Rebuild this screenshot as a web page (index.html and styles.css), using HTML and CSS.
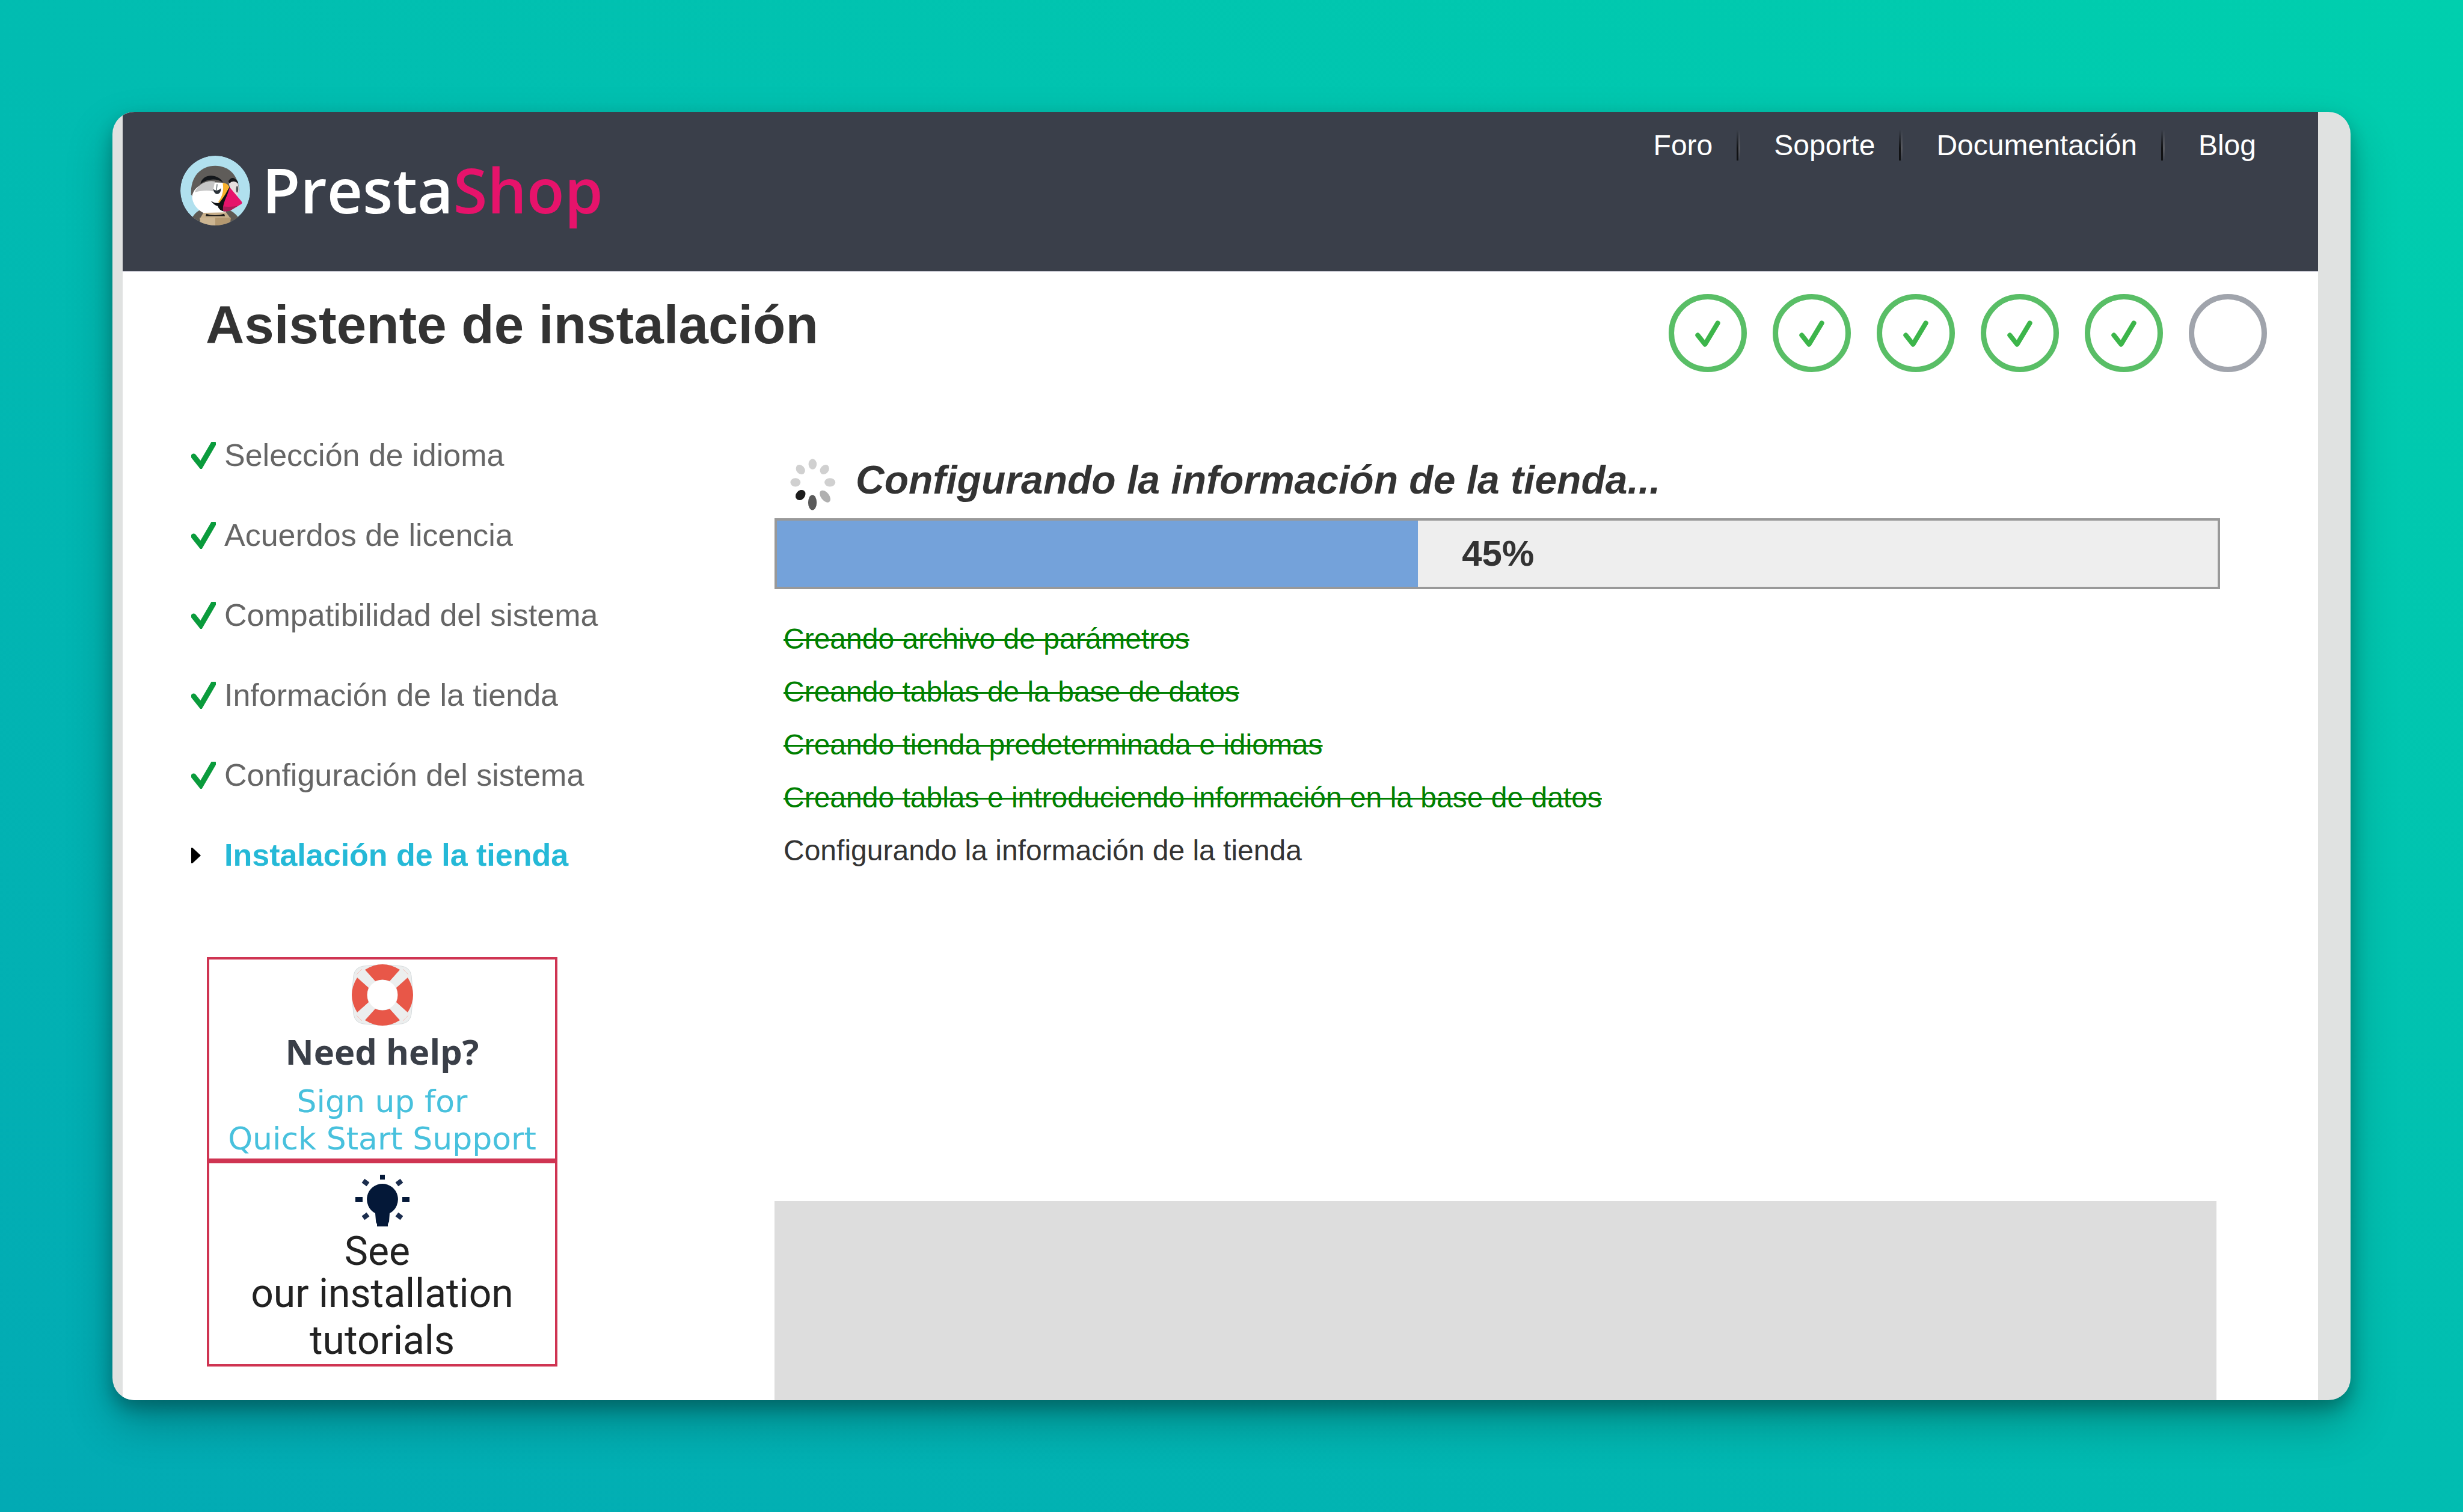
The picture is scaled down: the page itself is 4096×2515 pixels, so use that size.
FILE: index.html
```html
<!DOCTYPE html>
<html lang="es">
<head>
<meta charset="utf-8">
<title>PrestaShop - Asistente de instalación</title>
<link rel="stylesheet" href="styles.css">
</head>
<body>
<svg class="defs" aria-hidden="true">
  <symbol id="done" viewBox="0 0 41 45"><path d="M4 24 L16 39 L37 3" fill="none" stroke="#0a9b3c" stroke-width="9" stroke-linecap="round"/></symbol>
  <symbol id="step-done" viewBox="0 0 129 129"><circle cx="64.500" cy="64.500" r="60" fill="none" stroke="#59be66" stroke-width="9"/><path d="M48 68 L60 83 L81 48" fill="none" stroke="#3cb54a" stroke-width="8" stroke-linecap="round" stroke-linejoin="round"/></symbol>
</svg>
<div class="window">
  <div class="page">
    <header class="header">
      <a class="logo" href="#">
        <svg class="puffin" viewBox="65 54 374 374" aria-hidden="true">
          <clipPath id="badge"><circle cx="252" cy="241" r="187"/></clipPath>
          <g clip-path="url(#badge)">
            <circle cx="252" cy="241" r="187" fill="#b0e0ee"/>
            <path d="M125 392 Q150 345 190 342 L315 342 Q350 350 378 388 L330 430 L170 430 Z" fill="#5e5953"/>
            <path d="M122 262 C118 165 175 108 252 108 C325 108 378 160 380 245 L376 300 L300 380 L190 350 Z" fill="#5f5c59"/>
            <path d="M325 205 Q345 175 372 200 Q385 240 370 280 L335 240 Z" fill="#e6dfdf"/>
            <path d="M380 240 L388 300 L366 280 Z" fill="#b0e0ee"/>
            <path d="M322 190 Q345 155 372 192 L376 205 Q350 180 328 202 Z" fill="#15171a"/>
            <ellipse cx="369" cy="234" rx="6" ry="18" fill="#4d5357"/>
            <path d="M128 270 C140 215 190 190 300 200 L290 290 L310 365 C250 385 195 372 165 345 C142 325 128 300 128 270 Z" fill="#fff"/>
            <path d="M142 250 C155 210 205 182 250 192 L240 245 Q200 235 142 250 Z" fill="#c6c6c6"/>
            <path d="M172 205 C185 145 270 150 294 198 C260 175 215 175 172 205 Z" fill="#14171b"/>
            <path d="M240 232 Q262 250 282 228 Q284 258 261 260 Q245 256 240 232 Z" fill="#2a3238"/>
            <path d="M262 207 L258 240" stroke="#6e767b" stroke-width="5"/>
            <path d="M292 200 Q318 200 328 224 Q305 255 292 318 L268 302 Q302 258 292 200 Z" fill="#f8b12c"/>
            <path d="M328 222 C310 255 300 275 274 306 Q250 312 228 296 Q245 320 265 324 Q272 348 302 354 L320 320 L338 240 Z" fill="#101214"/>
            <path d="M330 224 L392 298 Q400 308 390 314 L338 345 Q312 356 294 350 Q290 330 303 295 Q318 262 330 224 Z" fill="#e6136b"/>
            <path d="M294 326 Q335 332 376 322 L338 345 Q312 356 294 350 Z" fill="#a81d56"/>
            <path d="M188 360 L310 358 L332 388 L172 388 Z" fill="#c7ae8a"/>
            <path d="M204 366 Q250 380 300 366 L304 378 L200 378 Z" fill="#1d1b19"/>
            <path d="M168 386 L252 386 L252 430 L175 428 Z" fill="#ccb592"/>
            <path d="M252 386 L336 386 L330 428 L252 430 Z" fill="#b39870"/>
          </g>
        </svg>
        <span class="wordmark">Presta<span class="wordmark-shop">Shop</span></span>
      </a>
      <nav>
        <ul class="links">
          <li><a href="#">Foro</a></li>
          <li><a href="#">Soporte</a></li>
          <li><a href="#">Documentación</a></li>
          <li><a href="#">Blog</a></li>
        </ul>
      </nav>
    </header>

    <div class="titlebar">
      <h1>Asistente de instalación</h1>
      <ol class="steps" aria-label="Progreso">
        <li><svg><use href="#step-done"/></svg></li>
        <li><svg><use href="#step-done"/></svg></li>
        <li><svg><use href="#step-done"/></svg></li>
        <li><svg><use href="#step-done"/></svg></li>
        <li><svg><use href="#step-done"/></svg></li>
        <li><svg viewBox="0 0 129 129"><circle cx="64.500" cy="64.500" r="60" fill="none" stroke="#a0a4ac" stroke-width="9"/></svg></li>
      </ol>
    </div>

    <div class="content">
      <aside class="sidebar">
        <ol class="stages">
          <li><svg class="mark"><use href="#done"/></svg>Selección de idioma</li>
          <li><svg class="mark"><use href="#done"/></svg>Acuerdos de licencia</li>
          <li><svg class="mark"><use href="#done"/></svg>Compatibilidad del sistema</li>
          <li><svg class="mark"><use href="#done"/></svg>Información de la tienda</li>
          <li><svg class="mark"><use href="#done"/></svg>Configuración del sistema</li>
          <li class="current"><svg class="mark" viewBox="0 0 41 45"><path d="M0 10 L2 10 L16 23 L2 36 L0 36 Z"/></svg>Instalación de la tienda</li>
        </ol>
        <div class="help">
          <a class="card" href="#">
            <svg class="buoy" viewBox="0 0 104 104" aria-hidden="true">
              <path d="M20 4 Q52 0 84 4 Q98 6 100 20 Q104 52 100 84 Q98 98 84 100 Q52 104 20 100 Q6 98 4 84 Q0 52 4 20 Q6 6 20 4 Z" fill="#eceeee" stroke="#d6dcde" stroke-width="1"/>
              <path d="M23 10 Q52 -8 81 10 L64 29 Q52 24 40 29 Z M94 23 Q112 52 94 81 L75 64 Q80 52 75 40 Z M81 94 Q52 112 23 94 L40 75 Q52 80 64 75 Z M10 81 Q-8 52 10 23 L29 40 Q24 52 29 64 Z" fill="#e85748"/>
              <path d="M9 18 L18 9 M86 9 L95 18 M95 86 L86 95 M18 95 L9 86" stroke="#f4c3bd" stroke-width="1"/>
              <circle cx="52" cy="52" r="25" fill="#fff"/>
            </svg>
            <strong>Need help?</strong>
            <span class="signup">Sign up for<br>Quick Start Support</span>
          </a>
          <a class="card tutorials" href="#">
            <svg class="bulb" viewBox="0 0 90 86" aria-hidden="true">
              <g fill="#041838"><path d="M45 15 A26 26 0 0 1 57 64 L56 78 Q55 80 54 82 L54 86 L36 86 L36 82 Q34 80 34 76 L33 64 A26 26 0 0 1 45 15 Z"/>
              <rect x="41" y="0" width="8" height="8"/><rect x="0" y="37" width="12" height="8"/><rect x="78" y="37" width="12" height="8"/></g>
              <path d="M13 10 L21 16 M77 10 L69 16 M13 72 L21 66 M77 72 L69 66" stroke="#1b2d4e" stroke-width="8"/>
            </svg>
            <span class="see">See&nbsp;</span>
            <span class="see-more">our installation<br>tutorials</span>
          </a>
        </div>
      </aside>

      <main class="main">
        <div class="status">
          <svg class="spinner" viewBox="50 45 270 300" aria-hidden="true">
            <g fill="#d0d0d0">
              <ellipse cx="183" cy="87" rx="22" ry="28"/>
              <ellipse cx="247" cy="116" rx="22" ry="28" transform="rotate(40 247 116)"/>
              <ellipse cx="276" cy="185" rx="29" ry="23"/>
              <ellipse cx="91" cy="185" rx="27" ry="23"/>
              <ellipse cx="118" cy="116" rx="22" ry="28" transform="rotate(-40 118 116)"/>
            </g>
            <ellipse cx="250" cy="260" rx="22" ry="37" transform="rotate(-38 250 260)" fill="#b0b0b0"/>
            <ellipse cx="182" cy="293" rx="23" ry="41" fill="#5a5a5a"/>
            <ellipse cx="118" cy="253" rx="24" ry="30" transform="rotate(40 118 253)" fill="#1c1c1c"/>
          </svg>
          <h2 id="task">Configurando la información de la tienda...</h2>
        </div>
        <div class="progress" role="progressbar" aria-labelledby="task" aria-valuenow="45" aria-valuemin="0" aria-valuemax="100">
          <div class="progress-fill" style="width: 44.5%"></div>
          <span class="progress-value">45%</span>
        </div>
        <ol class="tasks">
          <li class="finished"><span>Creando archivo de parámetros</span></li>
          <li class="finished"><span>Creando tablas de la base de datos</span></li>
          <li class="finished"><span>Creando tienda predeterminada e idiomas</span></li>
          <li class="finished"><span>Creando tablas e introduciendo información en la base de datos</span></li>
          <li>Configurando la información de la tienda</li>
        </ol>
        <div class="panel"></div>
      </main>
    </div>
  </div>
</div>
</body>
</html>
```
FILE: styles.css
```css
* { box-sizing: border-box; }
body, h1, h2, ul, ol { margin: 0; padding: 0; }
ul, ol { list-style: none; }
a { text-decoration: none; }
svg { display: block; flex: none; }

body {
  display: flex;
  min-height: 100vh;
  padding: 186px 187px;
  background: linear-gradient(to top right, #02aab4, #00cfae);
  font: 48px "Liberation Sans", Arial, sans-serif;
  color: #333;
}
.defs { position: absolute; width: 0; height: 0; }

.window {
  display: flex;
  flex: 1;
  padding: 0 54px 0 17px;
  overflow: hidden;
  border-radius: 37px;
  background: #e0e2e1;
  box-shadow: 0 37px 75px rgba(0, 0, 0, .25), 0 14px 28px rgba(0, 0, 0, .25);
}
.page {
  display: flex;
  flex: 1;
  flex-direction: column;
  background: #fff;
}

.header {
  display: flex;
  align-items: flex-start;
  justify-content: space-between;
  padding: 30px 103px 76px 96px;
  border-bottom: 1px solid #c9c9d4;
  background: #3a3f4a;
}
.logo {
  display: flex;
  gap: 20px;
  margin-top: 43px;
}
.puffin { width: 116px; height: 116px; }
.wordmark {
  font: 600 103px/112px "Open Sans", sans-serif;
  color: #fff;
}
.wordmark-shop { color: #e6136b; }
.links { display: flex; line-height: 51px; }
.links li { display: flex; }
.links a { color: #fff; }
.links li + li::before {
  content: "";
  width: 6px;
  margin: 0 56px 0 40px;
  background:
    linear-gradient(transparent, #101113 60%) left / 3px 100% no-repeat,
    linear-gradient(transparent, #585a60 60%, #3a3f4a) right / 3px 100% no-repeat;
}

.titlebar {
  display: flex;
  align-items: flex-start;
  justify-content: space-between;
  padding: 37px 85px 0 138px;
}
h1 { font-size: 89px; line-height: 102px; }
.steps { display: flex; gap: 43px; }
.steps svg { width: 130px; height: 130px; }

.content {
  display: flex;
  flex: 1;
  padding: 0 163px 0 114px;
}
.sidebar { width: 970px; padding-top: 72px; }
.stages {
  font-size: 52px;
  line-height: 133px;
  color: #666;
}
.stages li {
  display: flex;
  gap: 14px;
  align-items: center;
}
.stages .current { font-weight: 700; color: #25b9d7; }
.mark { width: 41px; height: 45px; }
.help {
  width: 583px;
  margin: 103px 0 0 26px;
}
.card {
  display: flex;
  flex-direction: column;
  align-items: center;
  padding: 7px 0 2px;
  border: 4px solid #cf3452;
  text-align: center;
}
.buoy { width: 104px; height: 104px; }
.card strong {
  margin: 2px 0 12px;
  font: 700 58px/80px "Open Sans", sans-serif;
  color: #3a3f48;
}
.signup {
  font: 52px/62px "DejaVu Sans", sans-serif;
  color: #48c1dd;
}
.tutorials {
  padding: 19px 0 0;
  font: 66px/78px Roboto, sans-serif;
  color: #222;
}
.bulb { width: 90px; height: 86px; }
.see { margin-top: 11px; line-height: 62px; }

.main {
  display: flex;
  flex: 1;
  flex-direction: column;
  padding-top: 140px;
}
.status {
  display: flex;
  gap: 29px;
  align-items: flex-start;
  padding-left: 22px;
}
.spinner { width: 84px; height: 93px; }
h2 {
  font-size: 66px;
  font-style: italic;
  line-height: 78px;
}
.progress {
  display: flex;
  gap: 73px;
  margin-top: 10px;
  border: 4px solid #999;
  background: #eee;
}
.progress-fill { background: #74a2da; }
.progress-value {
  font-size: 60px;
  font-weight: 700;
  line-height: 110px;
}
.tasks {
  margin: 39px 0 539px;
  padding-left: 15px;
  line-height: 88px;
}
.finished { color: green; }
.finished span { text-decoration: line-through 3px; }
.panel {
  flex: 1;
  margin-right: 6px;
  background: #ddd;
}
```
